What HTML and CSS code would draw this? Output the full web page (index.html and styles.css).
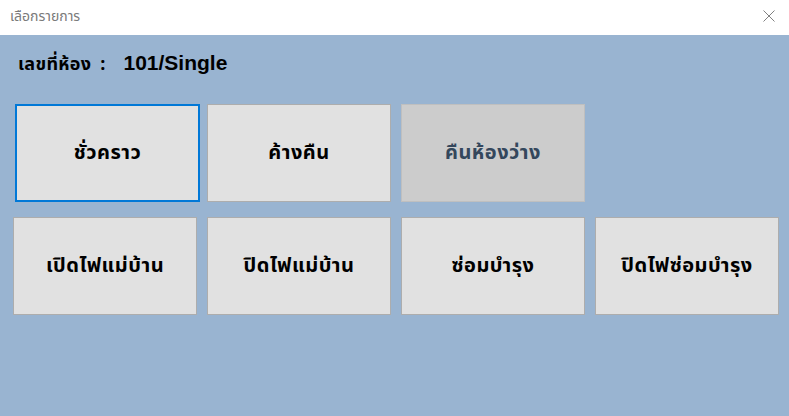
FILE: index.html
```html
<!DOCTYPE html>
<html lang="th">
<head>
<meta charset="utf-8">
<title>เลือกรายการ</title>
<link rel="stylesheet" href="styles.css">
</head>
<body>
<div class="window">
  <div class="titlebar">
    <span class="title">เลือกรายการ</span>
    <span class="close">
      <svg width="12" height="12" viewBox="0 0 12 12"><path d="M0.5 0.5 L11.5 11.5 M11.5 0.5 L0.5 11.5" stroke="#808080" stroke-width="1" fill="none"/></svg>
    </span>
  </div>
  <div class="content">
    <div class="room"><span class="room-label">เลขที่ห้อง</span><span class="colon">:</span><span class="room-no">101/Single</span></div>
    <div class="grid">
      <button class="btn focused">ชั่วคราว</button>
      <button class="btn">ค้างคืน</button>
      <button class="btn disabled">คืนห้องว่าง</button>
      <div class="empty"></div>
      <button class="btn">เปิดไฟแม่บ้าน</button>
      <button class="btn">ปิดไฟแม่บ้าน</button>
      <button class="btn">ซ่อมบำรุง</button>
      <button class="btn">ปิดไฟซ่อมบำรุง</button>
    </div>
  </div>
</div>
</body>
</html>
```
FILE: styles.css
```css
html, body {
  margin: 0;
  padding: 0;
  width: 789px;
  height: 416px;
  overflow: hidden;
}
.window {
  width: 789px;
  height: 416px;
  display: flex;
  flex-direction: column;
  background: #99b4d1;
  font-family: Tahoma, "Noto Sans Thai", "Noto Sans", "DejaVu Sans", sans-serif;
}
.titlebar {
  height: 35px;
  background: #ffffff;
  display: flex;
  align-items: center;
  justify-content: space-between;
  padding: 0 14px 0 10px;
  box-sizing: border-box;
}
.title {
  font-size: 14px;
  color: #7a7a7a;
  margin-top: -2px;
}
.close {
  display: flex;
  align-items: center;
  margin-top: -4px;
}
.content {
  flex: 1;
  padding: 15px 10px 0 13px;
}
.room {
  display: flex;
  align-items: baseline;
  font-weight: bold;
  color: #000;
  margin-left: 5px;
  height: 54px;
  line-height: 26px;
}
.room-label {
  font-size: 18px;
  letter-spacing: 0.3px;
}
.colon {
  font-size: 18px;
  margin-left: 9px;
}
.room-no {
  font-family: "Liberation Sans", Arial, sans-serif;
  font-size: 21px;
  margin-left: 18px;
}
.grid {
  display: grid;
  grid-template-columns: repeat(4, 184px);
  grid-template-rows: 98px 98px;
  column-gap: 10px;
  row-gap: 15px;
}
.btn {
  font-family: inherit;
  font-size: 20px;
  font-weight: bold;
  letter-spacing: 0.5px;
  color: #000;
  background: #e1e1e1;
  border: 1px solid #adadad;
  margin: 0;
  padding: 0;
}
.btn.focused {
  border: 2px solid #0078d7;
  margin-left: 2px;
  margin-right: -3px;
}
.btn.disabled {
  background: #cccccc;
  border-color: #bfbfbf;
  color: #34475c;
}
```
